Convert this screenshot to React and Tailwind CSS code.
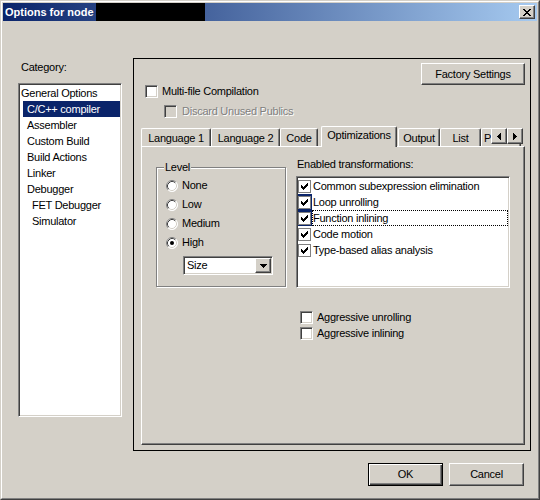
import React from "react";

const raised =
  "border border-t-white border-l-white border-r-[#404040] border-b-[#404040] shadow-[inset_-1px_-1px_#808080]";
const sunken =
  "border border-t-[#808080] border-l-[#808080] border-r-white border-b-white shadow-[inset_1px_1px_#404040,inset_-1px_-1px_#d4d0c8]";

function Check() {
  const cols = [2, 3, 4, 3, 2, 1, 0];
  return (
    <svg width="7" height="7" className="block" shapeRendering="crispEdges">
      {cols.map((y, i) => (
        <rect key={i} x={i} y={y} width="1" height="3" fill="black" />
      ))}
    </svg>
  );
}

function Box({ checked, disabled, flat }) {
  return (
    <div
      className={`w-[13px] h-[13px] shrink-0 flex items-center justify-center ${
        flat
          ? "border border-[#808080] bg-white"
          : disabled
          ? sunken + " bg-[#d4d0c8]"
          : sunken + " bg-white"
      }`}
    >
      {checked && <Check />}
    </div>
  );
}

function Radio({ checked }) {
  return (
    <svg width="12" height="12" className="block shrink-0">
      <circle cx="6" cy="6" r="5.5" fill="white" />
      <path d="M2.11 9.89 A5.5 5.5 0 0 1 9.89 2.11" stroke="#808080" fill="none" />
      <path d="M9.89 2.11 A5.5 5.5 0 0 1 2.11 9.89" stroke="#ffffff" fill="none" />
      <path d="M2.82 9.18 A4.5 4.5 0 0 1 9.18 2.82" stroke="#404040" fill="none" />
      <path d="M9.18 2.82 A4.5 4.5 0 0 1 2.82 9.18" stroke="#d4d0c8" fill="none" />
      {checked && <circle cx="6" cy="6" r="2" fill="black" />}
    </svg>
  );
}

function CloseX() {
  const rows = [0, 1, 2, 3, 4, 5, 6];
  return (
    <svg width="8" height="7" className="block" shapeRendering="crispEdges">
      {rows.map((i) => (
        <g key={i}>
          <rect x={i} y={i} width="2" height="1" fill="black" />
          <rect x={6 - i} y={i} width="2" height="1" fill="black" />
        </g>
      ))}
    </svg>
  );
}

function DownTri() {
  return (
    <svg width="7" height="4" className="block" shapeRendering="crispEdges">
      <rect x="0" y="0" width="7" height="1" fill="black" />
      <rect x="1" y="1" width="5" height="1" fill="black" />
      <rect x="2" y="2" width="3" height="1" fill="black" />
      <rect x="3" y="3" width="1" height="1" fill="black" />
    </svg>
  );
}

function LeftTri() {
  return (
    <svg width="4" height="7" className="block" shapeRendering="crispEdges">
      <rect x="0" y="3" width="1" height="1" fill="black" />
      <rect x="1" y="2" width="1" height="3" fill="black" />
      <rect x="2" y="1" width="1" height="5" fill="black" />
      <rect x="3" y="0" width="1" height="7" fill="black" />
    </svg>
  );
}

function RightTri() {
  return (
    <svg width="4" height="7" className="block" shapeRendering="crispEdges">
      <rect x="0" y="0" width="1" height="7" fill="black" />
      <rect x="1" y="1" width="1" height="5" fill="black" />
      <rect x="2" y="2" width="1" height="3" fill="black" />
      <rect x="3" y="3" width="1" height="1" fill="black" />
    </svg>
  );
}

function Tab({ label, w, selected, extra = "", left }) {
  if (selected) {
    return (
      <div
        className={`h-[21px] shrink-0 bg-[#d4d0c8] border-l border-t border-r border-l-white border-t-white border-r-[#404040] shadow-[inset_-1px_0_#808080] rounded-tl-[2px] rounded-tr-[2px] pt-[2px] text-center whitespace-nowrap ${extra}`}
        style={{ width: w }}
      >
        {label}
      </div>
    );
  }
  return (
    <div
      className={`h-[18px] mb-[1px] shrink-0 bg-[#d4d0c8] border-l border-t border-r border-l-white border-t-white border-r-[#404040] shadow-[inset_-1px_0_#808080] rounded-tl-[2px] rounded-tr-[2px] pt-[3px] whitespace-nowrap overflow-hidden ${
        left ? "text-left pl-[2px]" : "text-center"
      } ${extra}`}
      style={{ width: w }}
    >
      {label}
    </div>
  );
}

const categories = [
  { label: "General Options", level: 0 },
  { label: "C/C++ compiler", level: 1, selected: true },
  { label: "Assembler", level: 1 },
  { label: "Custom Build", level: 1 },
  { label: "Build Actions", level: 1 },
  { label: "Linker", level: 1 },
  { label: "Debugger", level: 1 },
  { label: "FET Debugger", level: 2 },
  { label: "Simulator", level: 2 },
];

const transforms = [
  { label: "Common subexpression elimination" },
  { label: "Loop unrolling", hl: true },
  { label: "Function inlining", hl: true, focus: true },
  { label: "Code motion" },
  { label: "Type-based alias analysis" },
];

export default function App() {
  return (
    <div className="w-[540px] h-[500px] bg-[#d4d0c8] border border-t-[#d4d0c8] border-l-[#d4d0c8] border-r-[#404040] border-b-[#404040] font-['Liberation_Sans',Arial,sans-serif] text-[11px] leading-[13px] text-black tracking-[-0.25px] select-none overflow-hidden">
      <div className="h-full border border-t-white border-l-white border-r-[#808080] border-b-[#808080] p-[1px] flex flex-col">
        {/* Title bar */}
        <div className="h-[18px] shrink-0 flex items-center bg-[linear-gradient(to_right,#0a246a,#a6caf0)]">
          <div className="w-[93px] pl-[2px] text-white font-bold tracking-normal whitespace-nowrap overflow-hidden">
            Options for node
          </div>
          <div className="w-[109px] h-full bg-black" />
          <div
            className={`ml-auto mr-[2px] w-[16px] h-[14px] bg-[#d4d0c8] flex items-center justify-center ${raised}`}
          >
            <CloseX />
          </div>
        </div>

        {/* Main area */}
        <div className="flex mt-[37px]">
          {/* Category column */}
          <div className="ml-[15px] w-[104px] shrink-0">
            <div className="mt-[3px] pl-[3px]">Category:</div>
            <div className={`mt-[9px] h-[334px] bg-white ${sunken} p-[1px]`}>
              {categories.map((c) => (
                <div
                  key={c.label}
                  className={`h-[16px] flex items-center whitespace-nowrap ${
                    c.level === 0 ? "pl-[1px]" : c.level === 1 ? "pl-[3px]" : "pl-[12px]"
                  }`}
                >
                  <div
                    className={`h-[16px] flex-1 flex items-center ${
                      c.level === 1 ? "pl-[4px]" : ""
                    } ${c.selected ? "bg-[#0a246a] text-white" : ""}`}
                  >
                    {c.label}
                  </div>
                </div>
              ))}
            </div>
          </div>

          {/* Right panel */}
          <div className="ml-[11px] w-[398px] h-[393px] shrink-0 border border-black flex flex-col">
            <div className="flex justify-end pt-[4px] pr-[5px]">
              <div
                className={`w-[104px] h-[22px] bg-[#d4d0c8] flex items-center justify-center ${raised}`}
              >
                Factory Settings
              </div>
            </div>
            <div className="h-[13px] flex items-center ml-[11px] gap-[4px]">
              <Box />
              <span>Multi-file Compilation</span>
            </div>
            <div className="h-[13px] flex items-center ml-[30px] gap-[5px] mt-[7px]">
              <Box disabled />
              <span className="text-[#808080] [text-shadow:1px_1px_0_#ffffff]">
                Discard Unused Publics
              </span>
            </div>

            {/* Tab strip */}
            <div className="relative z-10 mt-[8px] ml-[7px] w-[384px] h-[21px] flex items-end overflow-hidden -mb-[1px]">
              <Tab label="Language 1" w={70} />
              <Tab label="Language 2" w={69} />
              <Tab label="Code" w={38} />
              <Tab label="Optimizations" w={76} selected extra="ml-[3px]" />
              <Tab label="Output" w={42} extra="ml-[1px]" />
              <Tab label="List" w={41} />
              <Tab label="P" w={40} left />
              <div className="absolute right-[2px] top-[2px] flex">
                <div
                  className={`w-[16px] h-[16px] bg-[#d4d0c8] flex items-center justify-center ${raised}`}
                >
                  <LeftTri />
                </div>
                <div
                  className={`w-[16px] h-[16px] bg-[#d4d0c8] flex items-center justify-center ${raised}`}
                >
                  <RightTri />
                </div>
              </div>
            </div>

            {/* Tab page */}
            <div className="ml-[7px] w-[384px] h-[299px] border border-t-white border-l-white border-r-[#404040] border-b-[#404040] shadow-[inset_-1px_-1px_#808080] flex">
              {/* Level group */}
              <div className="ml-[14px] mt-[20px] w-[130px] h-[120px] shrink-0 relative border border-[#808080] shadow-[inset_1px_1px_#ffffff,1px_1px_#ffffff]">
                <div className="absolute left-[7px] top-[-7px] px-[1px] bg-[#d4d0c8]">Level</div>
                <div className="pt-[8px]">
                  {["None", "Low", "Medium", "High"].map((r) => (
                    <div key={r} className="h-[19px] flex items-center gap-[4px] pl-[9px]">
                      <Radio checked={r === "High"} />
                      <span>{r}</span>
                    </div>
                  ))}
                </div>
                <div className={`mt-[4px] ml-[26px] w-[90px] h-[19px] bg-white ${sunken} flex items-center p-[1px]`}>
                  <span className="flex-1 pl-[2px]">Size</span>
                  <div
                    className={`w-[16px] h-[15px] bg-[#d4d0c8] flex items-center justify-center ${raised}`}
                  >
                    <DownTri />
                  </div>
                </div>
              </div>

              {/* Transformations */}
              <div className="ml-[10px] mt-[11px] flex flex-col">
                <div className="pl-[1px]">Enabled transformations:</div>
                <div className={`mt-[5px] w-[214px] h-[112px] bg-white ${sunken} p-[1px]`}>
                  {transforms.map((t) => (
                    <div key={t.label} className="h-[16px] flex items-center">
                      <div
                        className={`w-[14px] h-[16px] flex items-center ${
                          t.hl ? "bg-[#0a246a]" : ""
                        }`}
                      >
                        <Box flat checked />
                      </div>
                      <div
                        className={`flex-1 h-[16px] flex items-center whitespace-nowrap border ${
                          t.focus ? "border-dotted border-black" : "border-transparent"
                        }`}
                      >
                        {t.label}
                      </div>
                    </div>
                  ))}
                </div>
                <div className="mt-[21px] ml-[4px]">
                  <div className="h-[16px] flex items-center gap-[4px]">
                    <Box />
                    <span>Aggressive unrolling</span>
                  </div>
                  <div className="h-[16px] flex items-center gap-[4px]">
                    <Box />
                    <span>Aggressive inlining</span>
                  </div>
                </div>
              </div>
            </div>
          </div>
        </div>

        {/* Buttons */}
        <div className="flex justify-end gap-[6px] pr-[13px] mt-[12px]">
          <div className="w-[75px] h-[23px] bg-[#d4d0c8] border border-black shadow-[inset_1px_1px_#ffffff,inset_-1px_-1px_#404040,inset_-2px_-2px_#808080] flex items-center justify-center">
            OK
          </div>
          <div
            className={`w-[75px] h-[23px] bg-[#d4d0c8] flex items-center justify-center ${raised}`}
          >
            Cancel
          </div>
        </div>
      </div>
    </div>
  );
}
